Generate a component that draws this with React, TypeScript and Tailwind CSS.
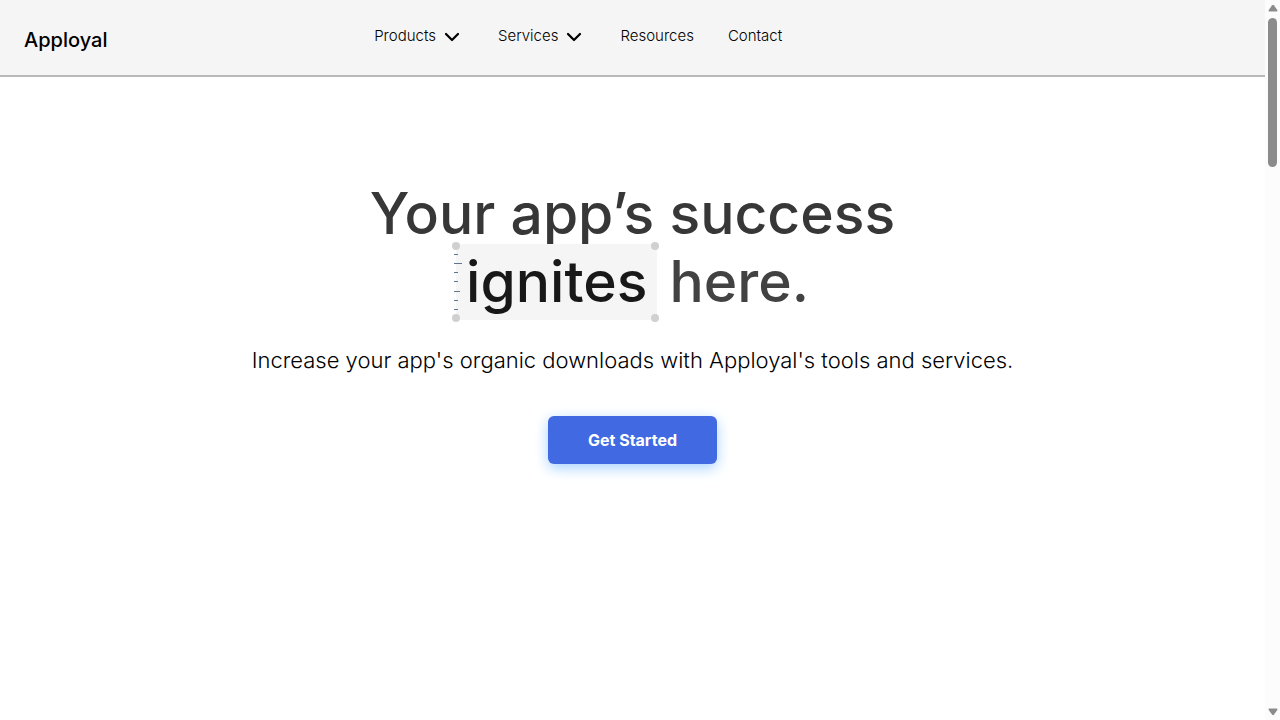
import { ChevronDown } from "lucide-react";

interface NavItem {
  label: string;
  hasMenu: boolean;
}

const navItems: NavItem[] = [
  { label: "Products", hasMenu: true },
  { label: "Services", hasMenu: true },
  { label: "Resources", hasMenu: false },
  { label: "Contact", hasMenu: false },
];

const rulerMarks = ["w-1", "w-2", "w-1", "w-1", "w-1.5", "w-1", "w-1"];

const Header = () => (
  <header className="flex h-[77px] items-center justify-between border-b-2 border-[#b8b8b8] bg-[#f5f5f5] px-6">
    <a href="#" className="pt-1 text-xl font-medium text-black">Apployal</a>

    <nav className="flex items-center gap-[34px] pb-0.5 text-[15px] font-light text-black">
      {navItems.map((item) =>
        item.hasMenu ? (
          <button key={item.label} type="button" className="flex items-center gap-1">
            {item.label}
            <ChevronDown size={24} strokeWidth={2.25} />
          </button>
        ) : (
          <a key={item.label} href="#">{item.label}</a>
        )
      )}
    </nav>

    <div className="w-48" />
  </header>
);

const Handle = ({ className }: { className: string }) => (
  <span className={`absolute size-2 rounded-full bg-[#d0d0d0] ${className}`} />
);

const Highlight = ({ children }: { children: string }) => (
  <span className="relative inline-block h-[76px] bg-[#f5f5f5] px-2.5 leading-[76px] text-[#181818]">
    <span className="absolute -left-0.5 inset-y-2.5 flex flex-col justify-between">
      {rulerMarks.map((width, i) => (
        <span key={i} className={`h-px bg-slate-500 ${width}`} />
      ))}
    </span>
    {children}
    <Handle className="-left-1 -top-0.5" />
    <Handle className="-right-0.5 -top-0.5" />
    <Handle className="-bottom-0.5 -left-1" />
    <Handle className="-bottom-0.5 -right-0.5" />
  </span>
);

const Hero = () => (
  <main className="flex flex-col items-center px-6 pt-[107px] text-center">
    <h1 className="text-[57px] font-medium text-[#373737]">
      <span className="block leading-[60px]">Your app’s success</span>
      <span className="flex items-center justify-center gap-3 leading-[76px] text-[#424242]">
        <Highlight>ignites</Highlight>
        <span>here.</span>
      </span>
    </h1>

    <p className="mt-6 text-[22px] font-light leading-8 text-black">
      Increase your app's organic downloads with Apployal's tools and services.
    </p>

    <button
      type="button"
      className="mt-10 h-12 rounded-md bg-[#4169e1] px-10 text-base font-bold text-white shadow-[0_4px_14px_#a6d1ff]"
    >
      Get Started
    </button>
  </main>
);

const Scrollbar = () => (
  <div aria-hidden="true" className="flex w-[15px] shrink-0 flex-col items-center bg-[#fcfcfc] py-1">
    <svg viewBox="0 0 10 8" className="w-2.5 fill-[#8b8b8b]">
      <path d="M4.2 1.2Q5 .4 5.8 1.2L9.3 6Q9.8 7.5 8.5 7.5h-7Q.2 7.5.7 6z" />
    </svg>
    <div className="mt-1.5 h-[149px] w-[9px] rounded-full bg-[#8b8b8b]" />
    <svg viewBox="0 0 10 8" className="mt-auto w-2.5 rotate-180 fill-[#8b8b8b]">
      <path d="M4.2 1.2Q5 .4 5.8 1.2L9.3 6Q9.8 7.5 8.5 7.5h-7Q.2 7.5.7 6z" />
    </svg>
  </div>
);

const App = () => {
  return (
    <div className="flex min-h-screen bg-white font-[Inter,sans-serif]">
      <div className="min-w-0 flex-1">
        <Header />
        <Hero />
      </div>
      <Scrollbar />
    </div>
  );
};

export default App;
